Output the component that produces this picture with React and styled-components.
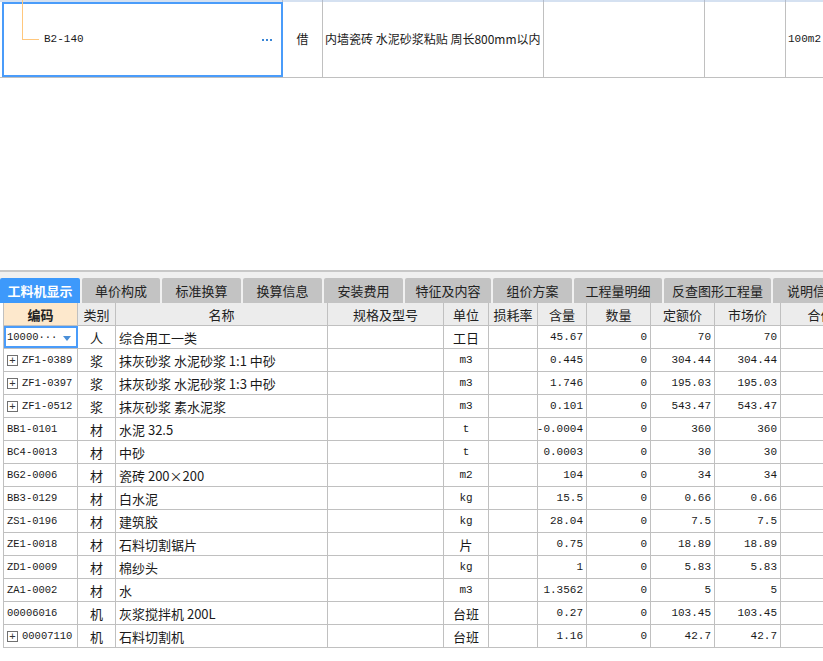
import React from "react";
import styled, { createGlobalStyle } from "styled-components";

const GlobalStyle = createGlobalStyle`
  html, body { margin: 0; padding: 0; background: #fff; }
  body {
    width: 823px;
    height: 661px;
    overflow: hidden;
    font-family: "Noto Sans CJK SC", "Liberation Sans", sans-serif;
    font-size: 12px;
    color: #1a1a1a;
  }
`;

const cols = [74, 38, 212, 116, 45, 49, 49, 64, 64, 66, 80];
const headers = ["编码", "类别", "名称", "规格及型号", "单位", "损耗率", "含量", "数量", "定额价", "市场价", "合价"];

const rows = [
  { code: "10000···", type: "人", name: "综合用工一类", unit: "工日", qty: "45.67", price: "70", market: "70", selected: true },
  { code: "ZF1-0389", type: "浆", name: "抹灰砂浆 水泥砂浆 1:1 中砂", unit: "m3", qty: "0.445", price: "304.44", market: "304.44", plus: true },
  { code: "ZF1-0397", type: "浆", name: "抹灰砂浆 水泥砂浆 1:3 中砂", unit: "m3", qty: "1.746", price: "195.03", market: "195.03", plus: true },
  { code: "ZF1-0512", type: "浆", name: "抹灰砂浆 素水泥浆", unit: "m3", qty: "0.101", price: "543.47", market: "543.47", plus: true },
  { code: "BB1-0101", type: "材", name: "水泥 32.5", unit: "t", qty: "-0.0004", price: "360", market: "360" },
  { code: "BC4-0013", type: "材", name: "中砂", unit: "t", qty: "0.0003", price: "30", market: "30" },
  { code: "BG2-0006", type: "材", name: "瓷砖 200×200", unit: "m2", qty: "104", price: "34", market: "34" },
  { code: "BB3-0129", type: "材", name: "白水泥", unit: "kg", qty: "15.5", price: "0.66", market: "0.66" },
  { code: "ZS1-0196", type: "材", name: "建筑胶", unit: "kg", qty: "28.04", price: "7.5", market: "7.5" },
  { code: "ZE1-0018", type: "材", name: "石料切割锯片", unit: "片", qty: "0.75", price: "18.89", market: "18.89" },
  { code: "ZD1-0009", type: "材", name: "棉纱头", unit: "kg", qty: "1", price: "5.83", market: "5.83" },
  { code: "ZA1-0002", type: "材", name: "水", unit: "m3", qty: "1.3562", price: "5", market: "5" },
  { code: "00006016", type: "机", name: "灰浆搅拌机 200L", unit: "台班", qty: "0.27", price: "103.45", market: "103.45" },
  { code: "00007110", type: "机", name: "石料切割机", unit: "台班", qty: "1.16", price: "42.7", market: "42.7", plus: true },
];

const tabs = [
  ["工料机显示", 80],
  ["单价构成", 78],
  ["标准换算", 79],
  ["换算信息", 79],
  ["安装费用", 79],
  ["特征及内容", 86],
  ["组价方案", 79],
  ["工程量明细", 88],
  ["反查图形工程量", 107],
  ["说明信息", 80],
];

const App = () => {
  return (
    <Page>
      <GlobalStyle />
      <TopBand>
        <BandCell w={283} />
        <BandCell w={40} />
        <BandCell w={221} />
        <BandCell w={161} />
        <BandCell w={81} />
        <BandCell w={60} />
      </TopBand>
      <TopRow>
        <TopSelected>
          <TreeLine />
          <TopCode>B2-140</TopCode>
          <Dots>
            <i />
            <i />
            <i />
          </Dots>
        </TopSelected>
        <TopCell w={40} center>借</TopCell>
        <TopCell w={221}>内墙瓷砖 水泥砂浆粘贴 周长800mm以内</TopCell>
        <TopCell w={161} />
        <TopCell w={81} />
        <TopCell w={60} mono>100m2</TopCell>
      </TopRow>

      <Spacer />

      <TabStrip>
        {tabs.map(([label, w], i) => (
          <Tab key={label} w={w} active={i === 0}>
            {label}
          </Tab>
        ))}
      </TabStrip>

      <Grid>
        <HeaderRow>
          {headers.map((h, i) => (
            <HeadCell key={h} w={cols[i]} first={i === 0}>
              {h}
            </HeadCell>
          ))}
        </HeaderRow>
        {rows.map((r) => (
          <Row key={r.code}>
            <CodeCell w={cols[0]} selected={r.selected}>
              {r.plus && <PlusBox>+</PlusBox>}
              <CodeText>{r.code}</CodeText>
              {r.selected && <DropArrow />}
            </CodeCell>
            <Cell w={cols[1]} align="center">{r.type}</Cell>
            <Cell w={cols[2]}>{r.name}</Cell>
            <Cell w={cols[3]} />
            <Cell w={cols[4]} align="center" mono={!/[\u4e00-\u9fa5]/.test(r.unit)}>
              {r.unit}
            </Cell>
            <Cell w={cols[5]} />
            <Cell w={cols[6]} align="right" mono>{r.qty}</Cell>
            <Cell w={cols[7]} align="right" mono>0</Cell>
            <Cell w={cols[8]} align="right" mono>{r.price}</Cell>
            <Cell w={cols[9]} align="right" mono>{r.market}</Cell>
            <Cell w={cols[10]} />
          </Row>
        ))}
      </Grid>
    </Page>
  );
};

export default App;

const Page = styled.div`
  width: 823px;
  height: 661px;
  overflow: hidden;
  background: #fff;
`;

const TopBand = styled.div`
  display: flex;
  height: 2px;
  background: #d5e1f1;
`;

const BandCell = styled.div`
  flex: 0 0 ${({ w }) => w}px;
  box-sizing: border-box;
  border-right: 1px solid #b4bccb;
`;

const TopRow = styled.div`
  display: flex;
  height: 76px;
  box-sizing: border-box;
  border-bottom: 1px solid #c0c0c0;
  padding-left: 2px;
`;

const TopSelected = styled.div`
  position: relative;
  flex: 0 0 281px;
  box-sizing: border-box;
  border: 2px solid #4a9cfa;
  display: flex;
  align-items: center;
  padding-left: 40px;
  padding-right: 8px;
`;

const TreeLine = styled.div`
  position: absolute;
  left: 18px;
  top: -4px;
  width: 16px;
  height: 39px;
  border-left: 1px solid #ffc77c;
  border-bottom: 1px solid #ffc77c;
`;

const TopCode = styled.span`
  flex: 1;
  font-family: "Liberation Mono", monospace;
  font-size: 11px;
  margin-top: -1px;
`;

const Dots = styled.span`
  display: flex;
  gap: 2px;
  margin-right: 1px;
  & > i {
    width: 2px;
    height: 2px;
    background: #3a86d6;
  }
`;

const TopCell = styled.div`
  flex: 0 0 ${({ w }) => w}px;
  box-sizing: border-box;
  border-right: 1px solid #c0c0c0;
  display: flex;
  align-items: center;
  justify-content: ${({ center }) => (center ? "center" : "flex-start")};
  padding-left: ${({ center }) => (center ? 0 : 2)}px;
  padding-bottom: 2px;
  font-family: ${({ mono }) =>
    mono ? `"Liberation Mono", monospace` : `"Noto Sans CJK SC", sans-serif`};
  font-size: ${({ mono }) => (mono ? 11 : 12)}px;
  white-space: nowrap;
  overflow: hidden;
  &:last-child { border-right: none; }
`;

const Spacer = styled.div`
  height: 192px;
`;

const TabStrip = styled.div`
  display: flex;
  gap: 2px;
  height: 33px;
  box-sizing: border-box;
  border-top: 2px solid #c8c8c8;
  background: #f0f0f0;
  padding-top: 6px;
  white-space: nowrap;
`;

const Tab = styled.div`
  flex: 0 0 ${({ w }) => w}px;
  display: flex;
  align-items: center;
  justify-content: center;
  font-size: 13px;
  background: ${({ active }) => (active ? "#3d99fb" : "#c3c3c3")};
  color: ${({ active }) => (active ? "#fff" : "#222")};
  font-weight: ${({ active }) => (active ? "bold" : "normal")};
  border-radius: 2px 2px 0 0;
  overflow: hidden;
`;

const Grid = styled.div`
  margin-left: 3px;
  border-left: 1px solid #c0c0c0;
  width: 900px;
`;

const HeaderRow = styled.div`
  display: flex;
  height: 23px;
  box-sizing: border-box;
  background: #ececec;
  border-bottom: 1px solid #c0c0c0;
`;

const HeadCell = styled.div`
  flex: 0 0 ${({ w }) => w}px;
  box-sizing: border-box;
  border-right: 1px solid #c0c0c0;
  display: flex;
  align-items: center;
  justify-content: center;
  font-size: 13px;
  background: ${({ first }) => (first ? "#fde8cc" : "transparent")};
  font-weight: ${({ first }) => (first ? "bold" : "normal")};
  color: #222;
`;

const Row = styled.div`
  display: flex;
  height: 23px;
  box-sizing: border-box;
  border-bottom: 1px solid #c0c0c0;
`;

const Cell = styled.div`
  flex: 0 0 ${({ w }) => w}px;
  box-sizing: border-box;
  border-right: 1px solid #c0c0c0;
  display: flex;
  align-items: center;
  justify-content: ${({ align }) =>
    align === "center" ? "center" : align === "right" ? "flex-end" : "flex-start"};
  padding: 0 3px;
  font-family: ${({ mono }) =>
    mono ? `"Liberation Mono", monospace` : `"Noto Sans CJK SC", sans-serif`};
  font-size: ${({ mono }) => (mono ? 11 : 13)}px;
  white-space: nowrap;
  overflow: hidden;
`;

const CodeCell = styled.div`
  position: relative;
  flex: 0 0 ${({ w }) => w}px;
  box-sizing: border-box;
  border-right: 1px solid #c0c0c0;
  display: flex;
  align-items: center;
  gap: 4px;
  padding-left: 3px;
  white-space: nowrap;
  overflow: hidden;
  ${({ selected }) =>
    selected &&
    `
    outline: 2px solid #4a9cfa;
    outline-offset: -2px;
  `}
`;

const CodeText = styled.span`
  font-family: "Liberation Mono", monospace;
  font-size: 10.5px;
`;

const PlusBox = styled.span`
  flex: 0 0 auto;
  width: 9px;
  height: 9px;
  border: 1px solid #707070;
  display: flex;
  align-items: center;
  justify-content: center;
  font-family: "Liberation Sans", sans-serif;
  font-size: 11px;
  line-height: 1;
  color: #333;
`;

const DropArrow = styled.span`
  position: absolute;
  right: 6px;
  top: 10px;
  width: 0;
  height: 0;
  border-left: 4px solid transparent;
  border-right: 4px solid transparent;
  border-top: 5px solid #4a8fd8;
`;
